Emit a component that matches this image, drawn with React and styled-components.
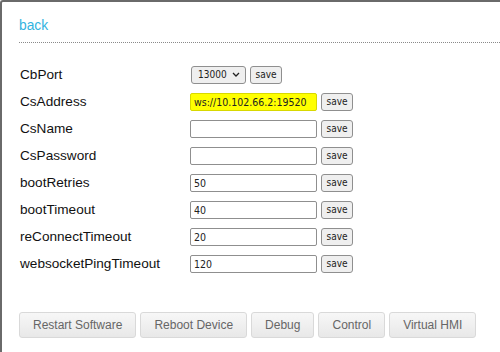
import React from 'react';
import styled, { createGlobalStyle } from 'styled-components';

const settings = [
  { name: 'CbPort', type: 'select', value: '13000' },
  { name: 'CsAddress', value: 'ws://10.102.66.2:19520', highlight: true },
  { name: 'CsName', value: '' },
  { name: 'CsPassword', value: '' },
  { name: 'bootRetries', value: '50' },
  { name: 'bootTimeout', value: '40' },
  { name: 'reConnectTimeout', value: '20' },
  { name: 'websocketPingTimeout', value: '120' },
];

const actions = ['Restart Software', 'Reboot Device', 'Debug', 'Control', 'Virtual HMI'];

const App = () => {
  return (
    <Frame>
      <GlobalStyle />
      <Header>
        <BackLink href="#">back</BackLink>
      </Header>
      <SettingsGrid>
        {settings.map((s) => (
          <React.Fragment key={s.name}>
            <Label>{s.name}</Label>
            <Controls>
              {s.type === 'select' ? (
                <SelectBox>
                  <span>{s.value}</span>
                  <svg width="8" height="5" viewBox="0 0 8 5">
                    <path d="M1 1 L4 4 L7 1" fill="none" stroke="#222" strokeWidth="1.3" />
                  </svg>
                </SelectBox>
              ) : (
                <TextField readOnly defaultValue={s.value} $highlight={s.highlight} />
              )}
              <SaveButton>save</SaveButton>
            </Controls>
          </React.Fragment>
        ))}
      </SettingsGrid>
      <ActionBar>
        {actions.map((a) => (
          <ActionButton key={a}>{a}</ActionButton>
        ))}
      </ActionBar>
    </Frame>
  );
};

export default App;

const GlobalStyle = createGlobalStyle`
  html, body {
    margin: 0;
    padding: 0;
    background: #fff;
  }
  body {
    font-family: "Liberation Sans", Arial, sans-serif;
    overflow: hidden;
  }
`;

const Frame = styled.div`
  box-sizing: border-box;
  width: 500px;
  height: 352px;
  border-top: 2px solid #6a6a6a;
  border-left: 2px solid #6a6a6a;
  border-top-left-radius: 3px;
  padding-left: 17px;
  background: #fff;
`;

const Header = styled.div`
  padding-top: 16px;
  padding-bottom: 8px;
  border-bottom: 1px dotted #8a8a8a;
`;

const BackLink = styled.a`
  display: block;
  font-size: 13.8px;
  line-height: 16px;
  color: #33b3e0;
  text-decoration: none;
`;

const SettingsGrid = styled.div`
  display: grid;
  grid-template-columns: 171px auto;
  grid-auto-rows: 27px;
  margin-top: 18px;
`;

const Label = styled.div`
  display: flex;
  align-items: center;
  font-size: 13.6px;
  color: #111;
  padding-left: 1px;
`;

const Controls = styled.div`
  display: flex;
  align-items: center;
  gap: 4px;
`;

const TextField = styled.input`
  box-sizing: border-box;
  width: 127px;
  height: 18px;
  margin: 0;
  padding: 0 3px;
  border: 1px solid ${(p) => (p.$highlight ? '#d8d800' : '#8f8f8f')};
  border-radius: 2px;
  background: ${(p) => (p.$highlight ? '#ffff00' : '#fff')};
  font-family: "DejaVu Sans Condensed", "DejaVu Sans", sans-serif;
  font-size: 10.5px;
  color: #222;
  outline: none;
`;

const SelectBox = styled.div`
  box-sizing: border-box;
  width: 55px;
  height: 18px;
  margin-left: 1px;
  padding: 0 5px 0 6px;
  display: flex;
  align-items: center;
  justify-content: space-between;
  border: 1px solid #8f8f8f;
  border-radius: 3px;
  background: #efefef;
  font-family: "DejaVu Sans Condensed", "DejaVu Sans", sans-serif;
  font-size: 10px;
  color: #222;
`;

const SaveButton = styled.button`
  box-sizing: border-box;
  height: 18px;
  width: 32px;
  margin: 0;
  padding: 0;
  border: 1px solid #8f8f8f;
  border-radius: 3px;
  background: #efefef;
  font-family: "DejaVu Sans Condensed", "DejaVu Sans", sans-serif;
  font-size: 10px;
  color: #222;
`;

const ActionBar = styled.div`
  display: flex;
  gap: 4px;
  margin-top: 35px;
`;

const ActionButton = styled.button`
  box-sizing: border-box;
  height: 26px;
  margin: 0;
  padding: 0 13px;
  border: 1px solid #d9d9d9;
  border-radius: 3px;
  background: linear-gradient(#f7f7f7, #e8e8e8);
  font-family: "Liberation Sans", Arial, sans-serif;
  font-size: 12px;
  color: #666;
`;
